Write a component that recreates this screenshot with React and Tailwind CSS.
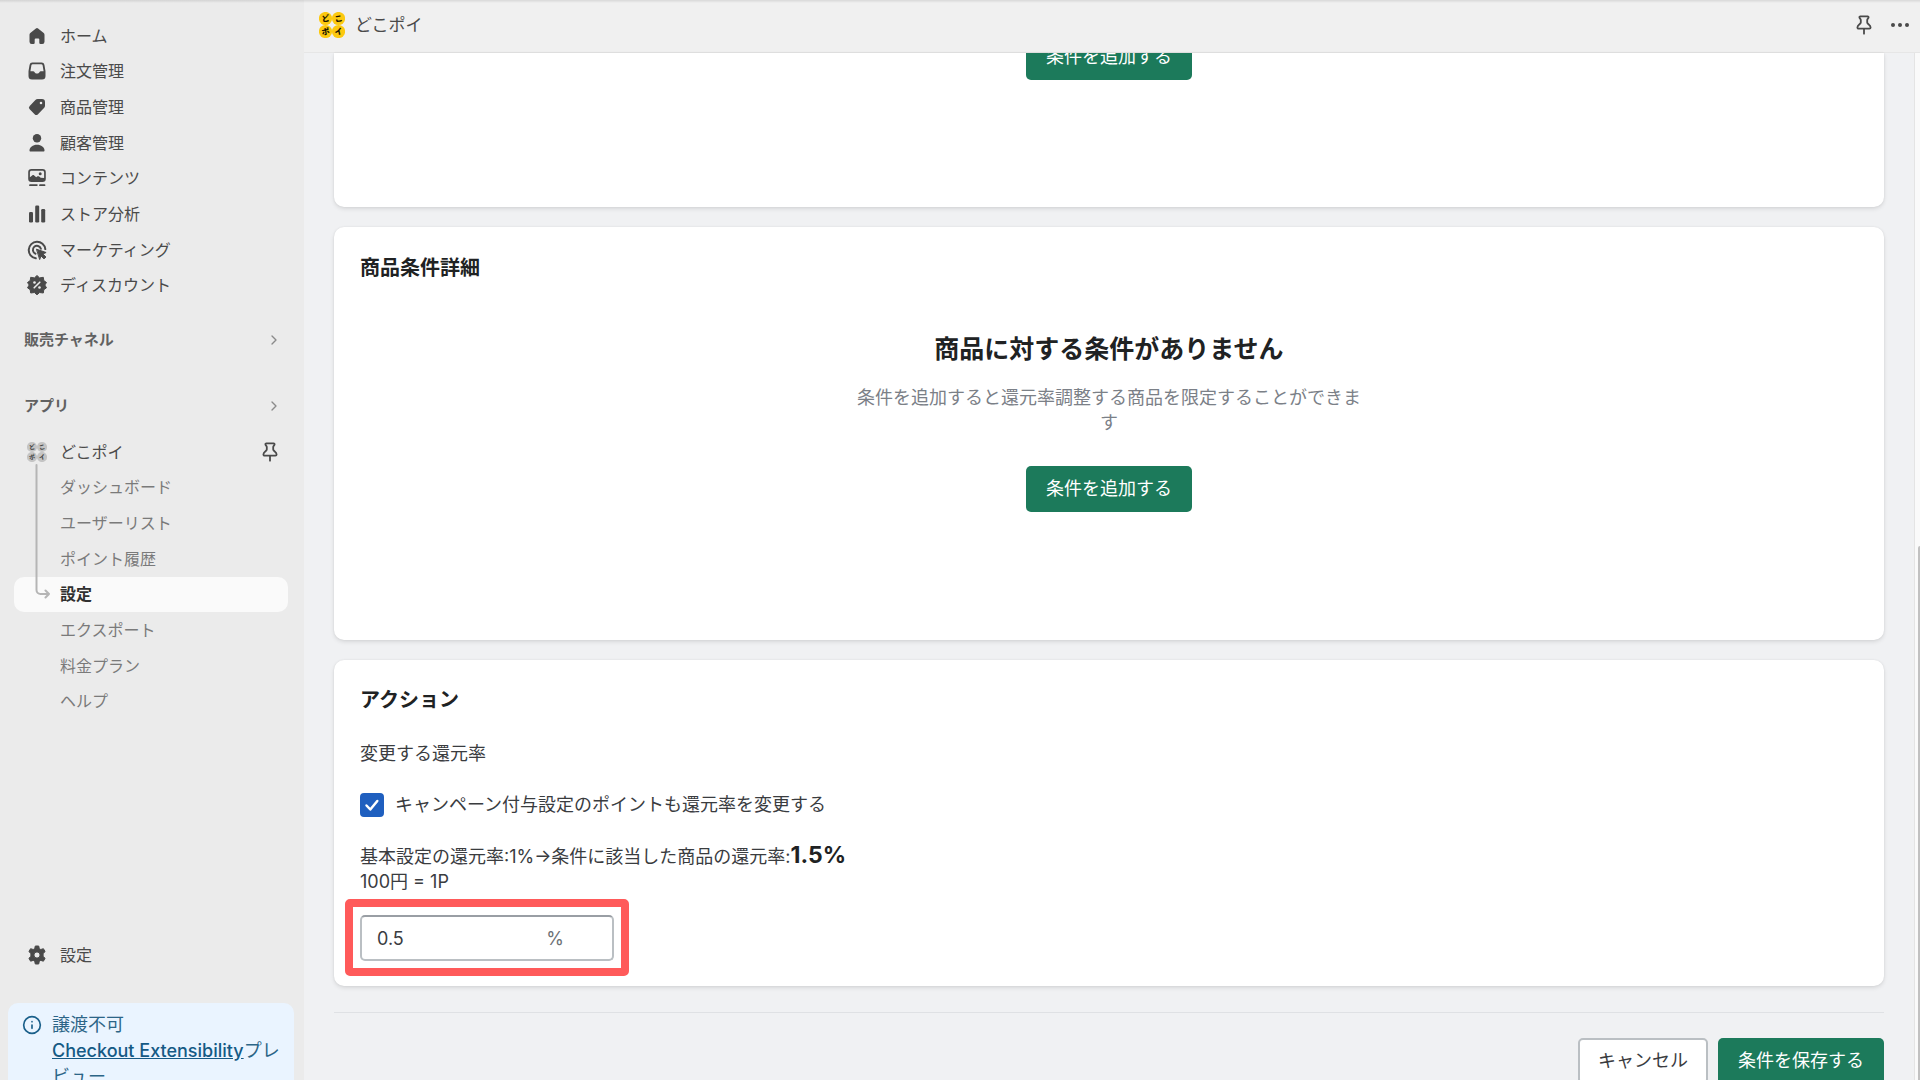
import React from 'react';
import { ChevronRight, Info } from 'lucide-react';

const iconBase = 'w-5 h-5 shrink-0';

const HomeIcon = () => (
  <svg viewBox="0 0 20 20" fill="currentColor" className={iconBase}>
    <path d="M8.900 2.400a1.700 1.700 0 0 1 2.200 0l5.600 4.700c.5.4.8 1 .8 1.700v7a2.200 2.200 0 0 1-2.200 2.200h-1.800a1.200 1.200 0 0 1-1.200-1.200v-3.300a1 1 0 0 0-1-1h-2.600a1 1 0 0 0-1 1v3.300a1.200 1.200 0 0 1-1.200 1.200h-1.800a2.200 2.200 0 0 1-2.200-2.200v-7c0-.7.3-1.300.8-1.700z" />
  </svg>
);

const InboxIcon = () => (
  <svg viewBox="0 0 20 20" fill="currentColor" className={iconBase}>
    <path fillRule="evenodd" d="M5.300 1.500h9.400a2.800 2.800 0 0 1 2.700 2.200l.9 5.300c.1.500.2 1 .2 1.500v4.500a3.500 3.500 0 0 1-3.500 3.500H5a3.500 3.500 0 0 1-3.500-3.500v-4.500c0-.5.1-1 .2-1.500l.9-5.300a2.800 2.800 0 0 1 2.700-2.200zm.5 1.700a1.400 1.400 0 0 0-1.400 1.100l-1 5.900h2.700c.7 0 1.200.4 1.500 1 .4.800 1.200 1.300 2.400 1.300s2-.5 2.400-1.300c.3-.6.800-1 1.500-1h2.700l-1-5.900a1.400 1.400 0 0 0-1.400-1.100z" />
  </svg>
);

const TagIcon = () => (
  <svg viewBox="0 0 20 20" fill="currentColor" className={iconBase}>
    <path fillRule="evenodd" d="M10.700 2h4.300a3 3 0 0 1 3 3v3.700c0 .9-.3 1.700-1 2.300l-6 6.200a2.400 2.400 0 0 1-3.400 0l-4.900-4.900a2.400 2.400 0 0 1 0-3.400l5.700-5.900c.6-.6 1.400-1 2.300-1zm3.300 5.300a1.300 1.300 0 1 0 0-2.600 1.300 1.300 0 0 0 0 2.600z" />
  </svg>
);

const PersonIcon = () => (
  <svg viewBox="0 0 20 20" fill="currentColor" className={iconBase}>
    <circle cx="10" cy="5.200" r="4.200" />
    <path d="M2.500 17.500c0-3.200 3.300-5.700 7.500-5.700s7.500 2.500 7.500 5.700c0 .6-.4 1-1 1h-13c-.6 0-1-.4-1-1z" />
  </svg>
);

const ContentIcon = () => (
  <svg viewBox="0 0 20 20" fill="currentColor" className={iconBase}>
    <path fillRule="evenodd" d="M4.500 1h11a3.300 3.300 0 0 1 3.300 3.300v6.400a3.300 3.300 0 0 1-3.300 3.300h-11a3.300 3.300 0 0 1-3.300-3.300v-6.400a3.300 3.300 0 0 1 3.300-3.300zm0 1.700c-.9 0-1.600.7-1.600 1.600v5l2.300-1.900c.6-.5 1.400-.5 2 0l2 1.900.9-.8c.6-.5 1.500-.5 2.100 0l1.500 1.200 3.400.2v-5.600c0-.9-.7-1.600-1.600-1.600zm8.700 4.500a1.500 1.500 0 1 0 0-3 1.500 1.500 0 0 0 0 3z" />
    <path d="M3 16.300h7.500v1.800h-7.500a.9.9 0 0 1 0-1.800zM13 16.300h4.500a.9.9 0 0 1 0 1.800h-4.500a.9.9 0 0 1 0-1.800z" />
  </svg>
);

const ChartIcon = () => (
  <svg viewBox="0 0 20 20" fill="currentColor" className={iconBase}>
    <rect x="2" y="8" width="4" height="10.500" rx="1.200" />
    <rect x="8.200" y="1.500" width="4" height="17" rx="1.200" />
    <rect x="14.200" y="5" width="4" height="13.500" rx="1.200" />
  </svg>
);

const TargetIcon = () => (
  <svg viewBox="0 0 20 20" fill="none" stroke="currentColor" strokeWidth="2" strokeLinecap="round" className={iconBase}>
    <path d="M8.800 18.300a8.300 8.300 0 1 1 9.500-9.200" />
    <path d="M8.500 13.700a4.100 4.100 0 1 1 5.400-5" />
    <path d="M9.800 9.300l9.300 3.200-3.200 1.500 3 3-1.900 1.900-3-3-1.200 3.300z" fill="currentColor" strokeWidth="1" strokeLinejoin="round" />
  </svg>
);

const DiscountIcon = () => (
  <svg viewBox="0 0 20 20" className={iconBase}>
    <path d="M10 .5l2.600 2.400 3.700-.600.500 3.300 2.700 1.900-1.700 2.500 1.700 2.800-2.700 1.900-.5 3.300-3.700-.5-2.600 2.300-2.600-2.300-3.700.5-.5-3.300-2.700-1.900 1.700-2.800-1.700-2.500 2.700-1.900.5-3.300 3.700.6z" fill="currentColor" stroke="currentColor" strokeLinejoin="round" />
    <path d="M7.200 12.800l5.600-5.600" stroke="#ebebeb" strokeWidth="1.600" strokeLinecap="round" />
    <circle cx="7.500" cy="7.500" r="1.300" fill="#ebebeb" />
    <circle cx="12.500" cy="12.500" r="1.300" fill="#ebebeb" />
  </svg>
);

const GearIcon = () => (
  <svg viewBox="0 0 20 20" fill="currentColor" className={iconBase}>
    <path fillRule="evenodd" stroke="currentColor" strokeLinejoin="round" d="M8.300 1h3.400l.6 2.700 1.500.8 2.600-.8 1.700 2.900-2 1.900v2.900l2 1.900-1.700 2.900-2.600-.8-1.500.8-.6 2.800H8.300l-.6-2.800-1.500-.8-2.600.8-1.700-2.900 2-1.900V8.500l-2-1.900 1.700-2.900 2.600.8 1.500-.8zM10 6.900a3.100 3.100 0 1 0 0 6.200 3.100 3.100 0 0 0 0-6.200z" />
  </svg>
);

const PinIcon = () => (
  <svg viewBox="0 0 20 20" fill="none" stroke="currentColor" strokeWidth="1.800" strokeLinecap="round" strokeLinejoin="round" className={iconBase}>
    <path d="M6.300 1.300h7.400c.5 0 .9.4.9.9 0 1.300-1.400 1.600-1.400 2.900v2.400c0 1.500 3.400 2.200 3.400 5 0 .7-.5 1.200-1.200 1.200H4.600c-.7 0-1.200-.5-1.200-1.200 0-2.800 3.400-3.500 3.400-5V5.100c0-1.300-1.400-1.600-1.400-2.900 0-.5.4-.9.9-.9z" />
    <path d="M10 14v4.700" />
  </svg>
);

// four round badges with the app's name, one character in each
const AppLogo = ({ muted }) => {
  const chars = [['ど', 6.5, 6.5], ['こ', 19.5, 6.5], ['ポ', 6.5, 19.5], ['イ', 19.5, 19.5]];
  return (
    <svg viewBox="0 0 26 26" className={muted ? 'w-5 h-5 shrink-0' : 'w-[26px] h-[26px] shrink-0'}>
      {chars.map(([c, x, y]) => (
        <g key={c}>
          <circle cx={x} cy={y} r="6.600" fill={muted ? '#c4c4c4' : '#fcc90f'} />
          <text
            x={x}
            y={y + 3}
            textAnchor="middle"
            fontSize="8"
            fontWeight="900"
            fontFamily="Noto Sans CJK JP, sans-serif"
            fill={muted ? '#4a4a4a' : '#1c1600'}
            transform={`rotate(-12 ${x} ${y})`}
          >
            {c}
          </text>
        </g>
      ))}
    </svg>
  );
};

const mainNav = [
  { label: 'ホーム', icon: HomeIcon },
  { label: '注文管理', icon: InboxIcon },
  { label: '商品管理', icon: TagIcon },
  { label: '顧客管理', icon: PersonIcon },
  { label: 'コンテンツ', icon: ContentIcon },
  { label: 'ストア分析', icon: ChartIcon },
  { label: 'マーケティング', icon: TargetIcon },
  { label: 'ディスカウント', icon: DiscountIcon },
];

const appNav = ['ダッシュボード', 'ユーザーリスト', 'ポイント履歴', '設定', 'エクスポート', '料金プラン', 'ヘルプ'];

const SectionButton = ({ children }) => (
  <button type="button" className="w-full h-6 pl-6 pr-[22px] flex items-center justify-between text-[15px] font-bold text-[#616161]">
    {children}
    <ChevronRight className="w-4 h-4 text-[#8a8a8a]" />
  </button>
);

const Sidebar = () => (
  <aside className="w-[304px] h-full shrink-0 flex flex-col bg-[#ebebeb] pt-[18px] text-base text-[#4a4a4a]">
    <nav className="h-[285px] shrink-0 flex flex-col">
      {mainNav.map((item) => (
        <a key={item.label} href="#" className="flex-1 flex items-center gap-[13px] pl-[27px] leading-6">
          <item.icon />
          {item.label}
        </a>
      ))}
    </nav>

    <div className="mt-[25px]">
      <SectionButton>販売チャネル</SectionButton>
    </div>
    <div className="mt-[42px]">
      <SectionButton>アプリ</SectionButton>
    </div>

    <nav className="relative mt-4 h-[285px] shrink-0 flex flex-col pl-[14px] pr-4">
      <div className="flex-1 flex items-center justify-between pl-[13px] pr-2">
        <a href="#" className="flex items-center gap-[13px] leading-6">
          <AppLogo muted />
          どこポイ
        </a>
        <button type="button" aria-label="ピン留めを外す">
          <PinIcon />
        </button>
      </div>
      {appNav.map((label) => (
        <a
          key={label}
          href="#"
          className={
            label === '設定'
              ? 'flex-1 flex items-center pl-[46px] rounded-[10px] bg-[#fafafa] font-bold text-[#303030] leading-6'
              : 'flex-1 flex items-center pl-[46px] text-[#7a7a7a] leading-6'
          }
        >
          {label}
        </a>
      ))}
      <svg viewBox="0 0 16 136" fill="none" stroke="#b5b5b5" strokeWidth="2" strokeLinecap="round" strokeLinejoin="round" className="absolute left-[35px] top-[30px] w-4 h-[136px]">
        <path d="M1.500 1v125a4 4 0 0 0 4 4H14M10.500 126.500l3.500 3.500-3.500 3.500" />
      </svg>
    </nav>

    <a href="#" className="mt-auto h-9 shrink-0 flex items-center gap-[13px] pl-[27px] leading-6">
      <GearIcon />
      設定
    </a>
    <div className="mt-[30px] h-[77px] shrink-0 pl-2 pr-[10px]">
      <div className="flex gap-[10px] rounded-[10px] bg-[#eaf4ff] pt-[9px] pb-3 pl-[14px] pr-2 text-lg leading-[26px] text-[#2c6587]">
        <Info className="w-5 h-5 mt-[3px] shrink-0 text-[#1a5f8a]" />
        <p>
          譲渡不可
          <br />
          <a href="#" className="font-medium underline text-[#155a85]">Checkout Extensibility</a>プレビュー
        </p>
      </div>
    </div>
  </aside>
);

const TopBar = () => (
  <header className="h-[53px] shrink-0 flex items-center gap-[10px] pl-[15px] pr-[10px] pb-[3px] bg-[#f0f0f0] border-b border-[#e6e6e6] text-[17px] text-[#4a4a4a]">
    <AppLogo />
    <h1 className="leading-6">どこポイ</h1>
    <button type="button" aria-label="ピン留め" className="ml-auto">
      <PinIcon />
    </button>
    <button type="button" aria-label="その他" className="ml-[6px]">
      <svg viewBox="0 0 20 20" fill="currentColor" className={iconBase}>
        <circle cx="3" cy="10" r="2" />
        <circle cx="10" cy="10" r="2" />
        <circle cx="17" cy="10" r="2" />
      </svg>
    </button>
  </header>
);

const PrimaryButton = ({ children, className = '' }) => (
  <button type="button" className={`h-[46px] px-5 rounded-[5px] bg-[#1c7a5b] text-lg text-white whitespace-nowrap ${className}`}>
    {children}
  </button>
);

const cardClass = 'bg-white shadow-[0_2px_4px_rgba(0,0,0,0.1),0_0_2px_rgba(0,0,0,0.08)]';

const ActionCard = () => {
  const [rate, setRate] = React.useState('0.5');
  const [campaign, setCampaign] = React.useState(true);

  return (
    <section className={`mt-5 rounded-[10px] px-[26px] py-[25px] text-lg leading-[25px] text-[#3a3c3f] ${cardClass}`}>
      <h2 className="text-xl leading-[30px] font-bold text-[#202223]">アクション</h2>
      <p className="mt-[26px]">変更する還元率</p>

      <label className="mt-[26px] w-fit flex items-center gap-[11px]">
        <span className="grid">
          <input
            type="checkbox"
            checked={campaign}
            onChange={(e) => setCampaign(e.target.checked)}
            className="peer appearance-none col-start-1 row-start-1 w-6 h-6 rounded-[4px] border-2 border-[#8c9196] checked:border-[#1f5fbf] checked:bg-[#1f5fbf]"
          />
          <svg viewBox="0 0 24 24" fill="none" stroke="white" strokeWidth="2.500" strokeLinecap="round" strokeLinejoin="round" className="pointer-events-none col-start-1 row-start-1 w-6 h-6 invisible peer-checked:visible">
            <path d="M6.500 12.500l3.800 4 7-8.500" />
          </svg>
        </span>
        キャンペーン付与設定のポイントも還元率を変更する
      </label>

      <p className="mt-[26px]">
        基本設定の還元率:1%→条件に該当した商品の還元率:<strong className="text-[23px] text-[#202223]">1.5%</strong>
      </p>
      <p>100円 = 1P</p>

      <div className="relative mt-[21px] w-[254px]">
        <div className="h-[46px] flex items-center rounded-[5px] border-2 border-[#babfc3] border-t-[#999ea4] bg-white pl-[15px] pr-12">
          <input
            type="text"
            aria-label="変更する還元率"
            value={rate}
            onChange={(e) => setRate(e.target.value)}
            className="min-w-0 flex-1 outline-none"
          />
          <span className="text-[#6d7175]">%</span>
        </div>
        <div className="pointer-events-none absolute -inset-x-[15px] -top-4 -bottom-[15px] rounded-[5px] border-8 border-[#ff5a5a]" />
      </div>
    </section>
  );
};

export default function App() {
  return (
    <div
      lang="ja"
      className="relative h-screen flex overflow-hidden bg-[#f0f1f3] font-[Inter,'Noto_Sans_CJK_JP',sans-serif]"
    >
      <Sidebar />
      <div className="flex-1 min-w-0 flex flex-col">
        <TopBar />
        <div className="flex-1 min-h-0 flex">
          <main className="flex-1 min-w-0 px-[30px]">
            <section className={`rounded-b-[10px] pb-[127px] flex justify-center overflow-hidden ${cardClass}`}>
              <PrimaryButton className="-mt-[19px]">条件を追加する</PrimaryButton>
            </section>

            <section className={`mt-5 rounded-[10px] px-[26px] pt-[26px] pb-32 ${cardClass}`}>
              <h2 className="text-xl leading-[30px] font-bold text-[#202223]">商品条件詳細</h2>
              <div className="mt-12 flex flex-col items-center text-center">
                <h3 className="text-[25px] leading-9 font-bold text-[#202223]">商品に対する条件がありません</h3>
                <p className="mt-[18px] max-w-[510px] text-lg leading-[25px] text-[#7b8087]">
                  条件を追加すると還元率調整する商品を限定することができます
                </p>
                <PrimaryButton className="mt-[31px]">条件を追加する</PrimaryButton>
              </div>
            </section>

            <ActionCard />

            <div className="mt-[26px] pt-[25px] flex justify-end gap-[10px] border-t border-[#dfe1e4]">
              <button type="button" className="h-[46px] px-[18px] rounded-[5px] border-2 border-[#babfc3] bg-white text-lg text-[#3a3c3f]">
                キャンセル
              </button>
              <PrimaryButton>条件を保存する</PrimaryButton>
            </div>
          </main>
          <div className="w-[6px] shrink-0 flex items-end justify-end border-l border-[#e4e4e4] bg-[#fafafa]">
            <div className="w-[2px] h-[52%] rounded-tl bg-[#c1c1c1]" />
          </div>
        </div>
      </div>
      <div className="pointer-events-none absolute inset-x-0 top-0 h-[3px] bg-gradient-to-b from-black/10 to-transparent" />
    </div>
  );
}
